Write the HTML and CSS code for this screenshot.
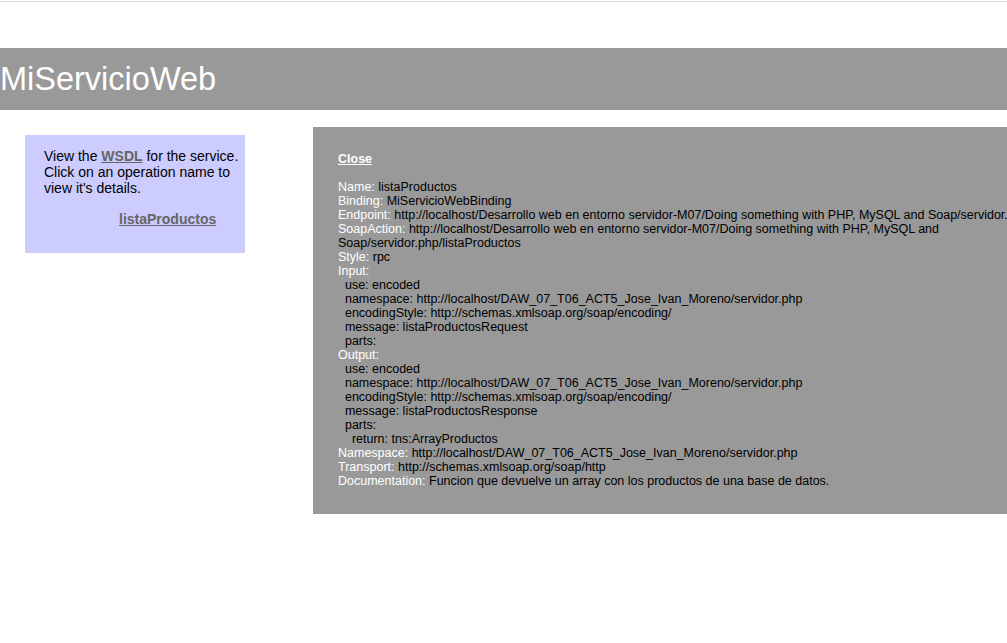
FILE: index.html
```html
<!DOCTYPE html>
<html>
<head>
<meta charset="utf-8">
<title>MiServicioWeb</title>
<link rel="stylesheet" href="styles.css">
</head>
<body>
<div class="topline"></div>
<div class="content">
  <div class="title">MiServicioWeb</div>
  <div class="nav">
    <p>View the <a href="#">WSDL</a> for the service. Click on an operation name to view it's details.</p>
    <ul><li><a href="#">listaProductos</a></li></ul>
  </div>
</div>
<div class="hidden">
<a href="#" class="close">Close</a><br><br>
<span class="lbl">Name:</span> listaProductos<br>
<span class="lbl">Binding:</span> MiServicioWebBinding<br>
<span class="lbl">Endpoint:</span> http://localhost/Desarrollo web en entorno servidor-M07/Doing something with PHP, MySQL and Soap/servidor.php<br>
<span class="lbl">SoapAction:</span> http://localhost/Desarrollo web en entorno servidor-M07/Doing something with PHP, MySQL and Soap/servidor.php/listaProductos<br>
<span class="lbl">Style:</span> rpc<br>
<span class="lbl">Input:</span><br>
&nbsp;&nbsp;use: encoded<br>
&nbsp;&nbsp;namespace: http://localhost/DAW_07_T06_ACT5_Jose_Ivan_Moreno/servidor.php<br>
&nbsp;&nbsp;encodingStyle: http://schemas.xmlsoap.org/soap/encoding/<br>
&nbsp;&nbsp;message: listaProductosRequest<br>
&nbsp;&nbsp;parts:<br>
<span class="lbl">Output:</span><br>
&nbsp;&nbsp;use: encoded<br>
&nbsp;&nbsp;namespace: http://localhost/DAW_07_T06_ACT5_Jose_Ivan_Moreno/servidor.php<br>
&nbsp;&nbsp;encodingStyle: http://schemas.xmlsoap.org/soap/encoding/<br>
&nbsp;&nbsp;message: listaProductosResponse<br>
&nbsp;&nbsp;parts:<br>
&nbsp;&nbsp;&nbsp;&nbsp;return: tns:ArrayProductos<br>
<span class="lbl">Namespace:</span> http://localhost/DAW_07_T06_ACT5_Jose_Ivan_Moreno/servidor.php<br>
<span class="lbl">Transport:</span> http://schemas.xmlsoap.org/soap/http<br>
<span class="lbl">Documentation:</span> Funcion que devuelve un array con los productos de una base de datos.
</div>
</body>
</html>
```
FILE: styles.css
```css
html { overflow: hidden; }
body {
  font-family: "Liberation Sans", Arial, sans-serif;
  color: #000;
  background: #fff;
  margin: 0;
}
.topline {
  height: 1px;
  margin-top: 1px;
  background: #dddddd;
}
.content {
  padding-top: 46px;
}
.title {
  font-size: 32.5px;
  line-height: 37px;
  color: #fff;
  background: #999999;
  padding: 12.5px 0;
  height: 37px;
}
.nav {
  margin: 25px 0 0 25px;
  width: 201px;
  padding: 12.5px 0 12.5px 19px;
  font-size: 14px;
  line-height: 16px;
  background: #ccccff;
}
.nav p { margin: 0 0 15px 0; }
.nav ul { margin: 15px 0 14px 0; padding-left: 75px; }
.nav li { list-style: none; margin: 0; }
a { color: #666666; font-weight: bold; }
.hidden {
  position: absolute;
  left: 313px;
  top: 127px;
  width: 750px;
  padding: 25px 25px 26px 25px;
  font-size: 12.5px;
  line-height: 14px;
  background: #999999;
}
.hidden a.close { color: #fff; }
.lbl { color: #fff; }
```
